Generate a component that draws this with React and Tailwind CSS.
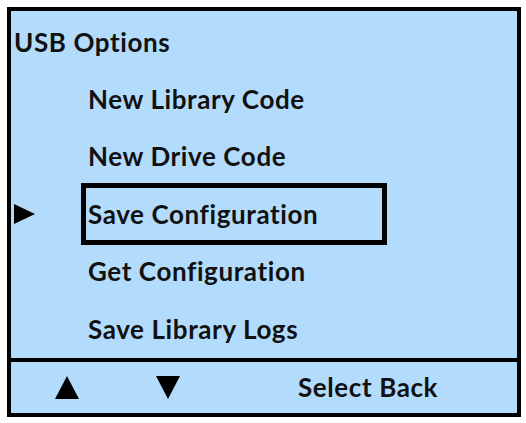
const items = [
  'New Library Code',
  'New Drive Code',
  'Save Configuration',
  'Get Configuration',
  'Save Library Logs',
];

const selected = 2;

export default function App() {
  return (
    <div className="w-[526px] h-[423px] bg-white pt-[7px] pl-[7px]" style={{ fontFamily: 'Lato, "Open Sans", sans-serif' }}>
      <div className="w-[514px] h-[410px] border-4 border-black bg-[#b3dcfc] flex flex-col text-[#111] text-[26px] font-bold tracking-[0.6px] [font-variant-ligatures:none]">
        {/* Menu */}
        <div className="h-[347px] flex flex-col">
          <div className="h-[60px] flex items-center pl-[3px] pt-[3px]">
            USB Options
          </div>
          {items.map((label, i) => (
            <div key={label} className="h-[58px] flex items-center">
              <div className="w-[70px] pl-[3px] flex items-center">
                {i === selected && (
                  <svg width="21" height="20" viewBox="0 0 21 20">
                    <polygon points="0,0 21,10 0,20" fill="#000" />
                  </svg>
                )}
              </div>
              <div
                className={
                  i === selected
                    ? 'h-[62px] w-[306px] border-[5px] border-black flex items-center pl-[2px]'
                    : 'pl-[7px]'
                }
              >
                {label}
              </div>
            </div>
          ))}
        </div>
        {/* Soft keys */}
        <div className="flex-1 border-t-4 border-black flex items-center">
          <div className="w-[68px] pl-[44px] flex">
            <svg width="24" height="23" viewBox="0 0 24 23">
              <polygon points="12,0 24,23 0,23" fill="#000" />
            </svg>
          </div>
          <div className="pl-[77px] flex">
            <svg width="24" height="23" viewBox="0 0 24 23">
              <polygon points="0,0 24,0 12,23" fill="#000" />
            </svg>
          </div>
          <div className="pl-[118px]">Select Back</div>
        </div>
      </div>
    </div>
  );
}
